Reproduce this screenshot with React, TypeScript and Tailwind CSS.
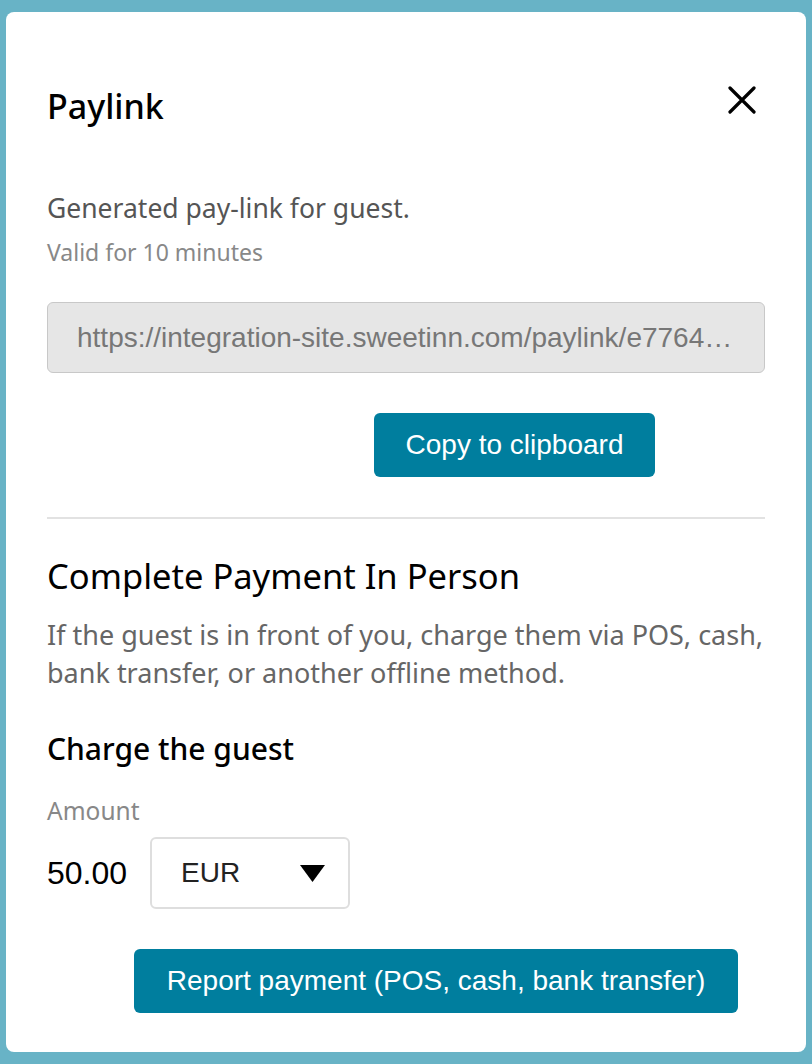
import { useState } from "react";

const PaylinkModal = () => {
    const [currency, setCurrency] = useState("EUR");
    const link = "https://integration-site.sweetinn.com/paylink/e7764b2c91f04a8d";

    return (
        <div className="w-[800px] h-[1040px] bg-white rounded-lg px-[41px] pt-[72px] flex flex-col font-['Noto_Sans',sans-serif]">
            <div className="flex items-center justify-between h-[44px]">
                <h2 className="text-[34px] font-medium text-black leading-none">Paylink</h2>
                <button className="mr-[9px] mb-[13px] text-black">
                    <svg width="28" height="28" viewBox="0 0 28 28" fill="none" stroke="currentColor" strokeWidth="3.2" strokeLinecap="round">
                        <path d="M2 2 L26 26 M26 2 L2 26"/>
                    </svg>
                </button>
            </div>

            <p className="mt-[63px] text-[26.5px] text-[#555] leading-[34px]">Generated pay-link for guest.</p>
            <p className="mt-[12px] text-[23px] text-[#888] leading-[30px]">Valid for 10 minutes</p>

            <input
                readOnly
                value={link}
                className="mt-[35px] h-[71px] w-full rounded-md border border-[#c8c8c8] bg-[#e6e6e6] px-[29px] text-[28px] text-[#777] truncate font-['Liberation_Sans',sans-serif] outline-none"
            />

            <div className="mt-[40px] flex justify-end pr-[110px]">
                <button className="h-[64px] w-[281px] rounded-md bg-[#007e9e] text-white text-[28px] font-['Liberation_Sans',sans-serif]">
                    Copy to clipboard
                </button>
            </div>

            <div className="mt-[40px] h-[2px] bg-[#e2e2e2]"/>

            <h2 className="mt-[35px] text-[34.5px] text-black leading-[44px]">Complete Payment In Person</h2>
            <p className="mt-[18px] text-[27px] text-[#666] leading-[38px]">
                If the guest is in front of you, charge them via POS, cash, bank transfer, or another offline method.
            </p>

            <h3 className="mt-[38px] text-[30px] font-medium text-black leading-[38px]">Charge the guest</h3>
            <p className="mt-[28px] text-[24.5px] text-[#888] leading-[30px]">Amount</p>

            <div className="mt-[11px] flex items-center gap-[23px] font-['Liberation_Sans',sans-serif]">
                <span className="text-[32px] text-black">50.00</span>
                <div className="relative w-[200px] h-[72px] rounded-md border-2 border-[#dedede] flex items-center px-[29px]">
                    <select
                        value={currency}
                        onChange={e => setCurrency(e.target.value)}
                        className="appearance-none bg-transparent text-[28px] text-[#222] outline-none w-full"
                    >
                        <option>EUR</option>
                        <option>USD</option>
                        <option>GBP</option>
                    </select>
                    <svg className="absolute right-[23px] pointer-events-none" width="25" height="17" viewBox="0 0 25 17">
                        <path d="M0 0 H25 L12.5 17 Z" fill="black"/>
                    </svg>
                </div>
            </div>

            <div className="mt-[40px] pl-[87px]">
                <button className="h-[64px] w-[604px] rounded-md bg-[#007e9e] text-white text-[28px] font-['Liberation_Sans',sans-serif]">
                    Report payment (POS, cash, bank transfer)
                </button>
            </div>
        </div>
    );
};

const App = () => {
    return (
        <div className="w-[812px] h-[1064px] bg-[#68b3c6] pt-[12px] pl-[6px] overflow-hidden">
            <PaylinkModal/>
        </div>
    );
};

export default App;
